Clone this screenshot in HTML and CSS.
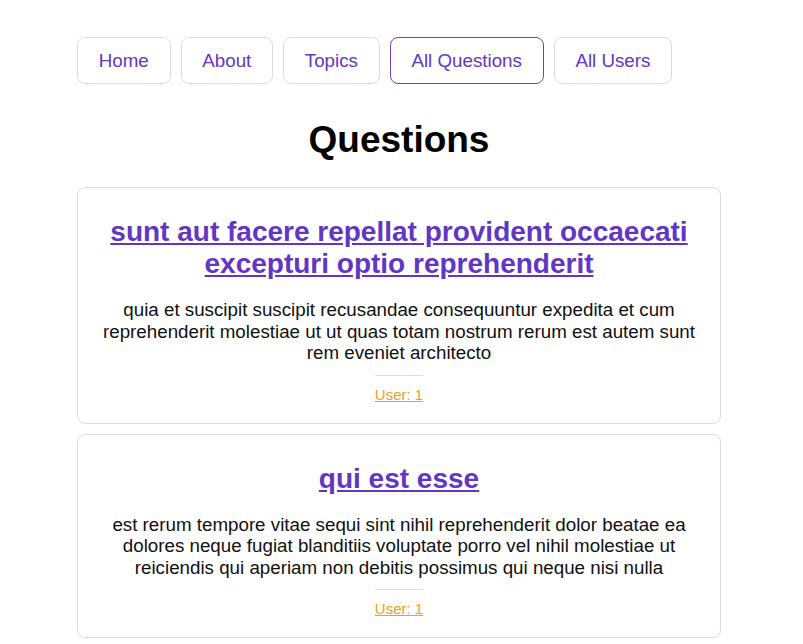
FILE: index.html
```html
<!DOCTYPE html>
<html>
<head>
<meta charset="utf-8">
<link rel="stylesheet" href="styles.css">
</head>
<body>
<div class="page">
  <nav class="nav">
    <a class="nav-btn" href="#">Home</a>
    <a class="nav-btn" href="#">About</a>
    <a class="nav-btn" href="#">Topics</a>
    <a class="nav-btn active" href="#">All Questions</a>
    <a class="nav-btn" href="#">All Users</a>
  </nav>
  <h1 class="heading">Questions</h1>
  <div class="list">
    <div class="card">
      <a class="title" href="#">sunt aut facere repellat provident occaecati excepturi optio reprehenderit</a>
      <p class="body">quia et suscipit suscipit recusandae consequuntur expedita et cum reprehenderit molestiae ut ut quas totam nostrum rerum est autem sunt rem eveniet architecto</p>
      <div class="divider"></div>
      <a class="user" href="#">User: 1</a>
    </div>
    <div class="card">
      <a class="title" href="#">qui est esse</a>
      <p class="body">est rerum tempore vitae sequi sint nihil reprehenderit dolor beatae ea dolores neque fugiat blanditiis voluptate porro vel nihil molestiae ut reiciendis qui aperiam non debitis possimus qui neque nisi nulla</p>
      <div class="divider"></div>
      <a class="user" href="#">User: 1</a>
    </div>
  </div>
</div>
</body>
</html>
```
FILE: styles.css
```css
html, body {
  margin: 0;
  padding: 0;
  background: #fff;
  font-family: "Liberation Sans", Arial, sans-serif;
  color: #111;
}
.page {
  width: 644px;
  margin-left: 77px;
  padding-top: 37px;
}
.nav {
  display: flex;
  gap: 10px;
}
.nav-btn {
  display: block;
  padding: 12px 20.75px;
  font-size: 18.75px;
  line-height: 21px;
  color: #6236c4;
  text-decoration: none;
  border: 1px solid #dcdcdc;
  border-radius: 8px;
}
.nav-btn.active {
  border-color: #6a3fc9;
}
.heading {
  margin: 35px 0 26px;
  text-align: center;
  font-size: 37px;
  line-height: 42px;
  font-weight: bold;
  color: #000;
}
.list {
  display: flex;
  flex-direction: column;
  gap: 10px;
}
.card {
  border: 1px solid #dcdcdc;
  border-radius: 8px;
  padding: 28px 24px 19px;
  display: flex;
  flex-direction: column;
  align-items: center;
  text-align: center;
}
.title {
  font-size: 28px;
  line-height: 32px;
  font-weight: bold;
  color: #6236c4;
  text-decoration: underline;
}
.body {
  margin: 19px 0 0;
  font-size: 18.75px;
  line-height: 21.5px;
  color: #111;
}
.divider {
  width: 48px;
  height: 1px;
  background: #dcdcdc;
  margin-top: 11px;
}
.user {
  margin-top: 10px;
  font-size: 15px;
  line-height: 18px;
  color: #f0a020;
  text-decoration: underline;
}
```
